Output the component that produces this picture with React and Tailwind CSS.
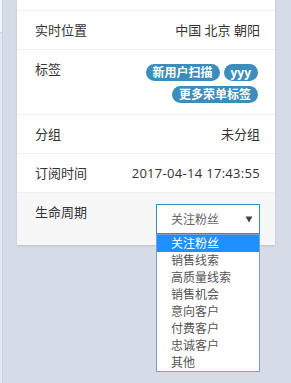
import React from 'react';

const font = { fontFamily: '"Open Sans", "Noto Sans CJK SC", sans-serif' };

const options = ['关注粉丝', '销售线索', '高质量线索', '销售机会', '意向客户', '付费客户', '忠诚客户', '其他'];

function Row({ label, children, className = '' }) {
  return (
    <div className={`flex items-start justify-between pl-[18px] pr-[15px] pt-3 pb-[11px] border-b border-[#f0f0f0] leading-[15px] ${className}`}>
      <span className="text-[#333]">{label}</span>
      {children}
    </div>
  );
}

function Tag({ children }) {
  return (
    <span className="inline-flex items-center h-[17px] px-[7px] rounded-full bg-[#3c8dbc] text-white text-[12px] font-bold leading-none">
      {children}
    </span>
  );
}

export default function App() {
  return (
    <div className="flex w-[291px] h-[383px] bg-[#d5dce7] text-[13px] overflow-hidden" style={font}>
      {/* left strip */}
      <div className="w-[3px] flex flex-col border-r border-[#c9d1dd]">
        <div className="h-[33px] bg-[#f1f3f7] border-b border-[#d6dbe2]" />
        <div className="flex-1 bg-[#e4e9f0]" />
      </div>

      <div className="ml-[14px] w-[258px] self-start bg-white shadow-[0_1px_2px_rgba(0,0,0,0.12)]">
        <div className="h-[11px] border-b border-[#f0f0f0]" />
        <Row label="实时位置">
          <span className="text-[#333]">中国 北京 朝阳</span>
        </Row>
        <Row label="标签" className="pb-3">
          <div className="mt-[2px] mr-[2px] flex flex-wrap justify-end gap-x-1 gap-y-[5px] max-w-[118px]">
            <Tag>新用户扫描</Tag>
            <Tag>yyy</Tag>
            <Tag>更多荣单标签</Tag>
          </div>
        </Row>
        <Row label="分组">
          <span className="text-[#333]">未分组</span>
        </Row>
        <Row label="订阅时间">
          <span className="text-[#333] tracking-[0.3px]">2017-04-14 17:43:55</span>
        </Row>
        <div className="flex items-start justify-between pl-[18px] pr-[15px] pt-3 pb-[11px] bg-[#f7f7f7] leading-[15px]">
          <span className="text-[#333]">生命周期</span>
          <div className="relative -mt-[1px] w-[104px]">
            <div className="flex items-center justify-between h-[30px] pl-[14px] pr-[6px] bg-white border border-[#3c8dbc] text-[12px] text-[#666]">
              <span>关注粉丝</span>
              <svg width="8" height="7" viewBox="0 0 8 7"><path d="M0.5 0.5h7L4 6.5z" fill="#444" /></svg>
            </div>
            <div className="absolute left-0 top-[30px] w-[104px] bg-white border border-[#7a9bd4] text-[12px]">
              {options.map((o, i) => (
                <div
                  key={o}
                  className={`h-[17px] leading-[17px] pl-[14px] ${i === 0 ? 'bg-[#1e90ff] text-white' : 'text-[#555]'}`}
                >
                  {o}
                </div>
              ))}
            </div>
          </div>
        </div>
      </div>
    </div>
  );
}
